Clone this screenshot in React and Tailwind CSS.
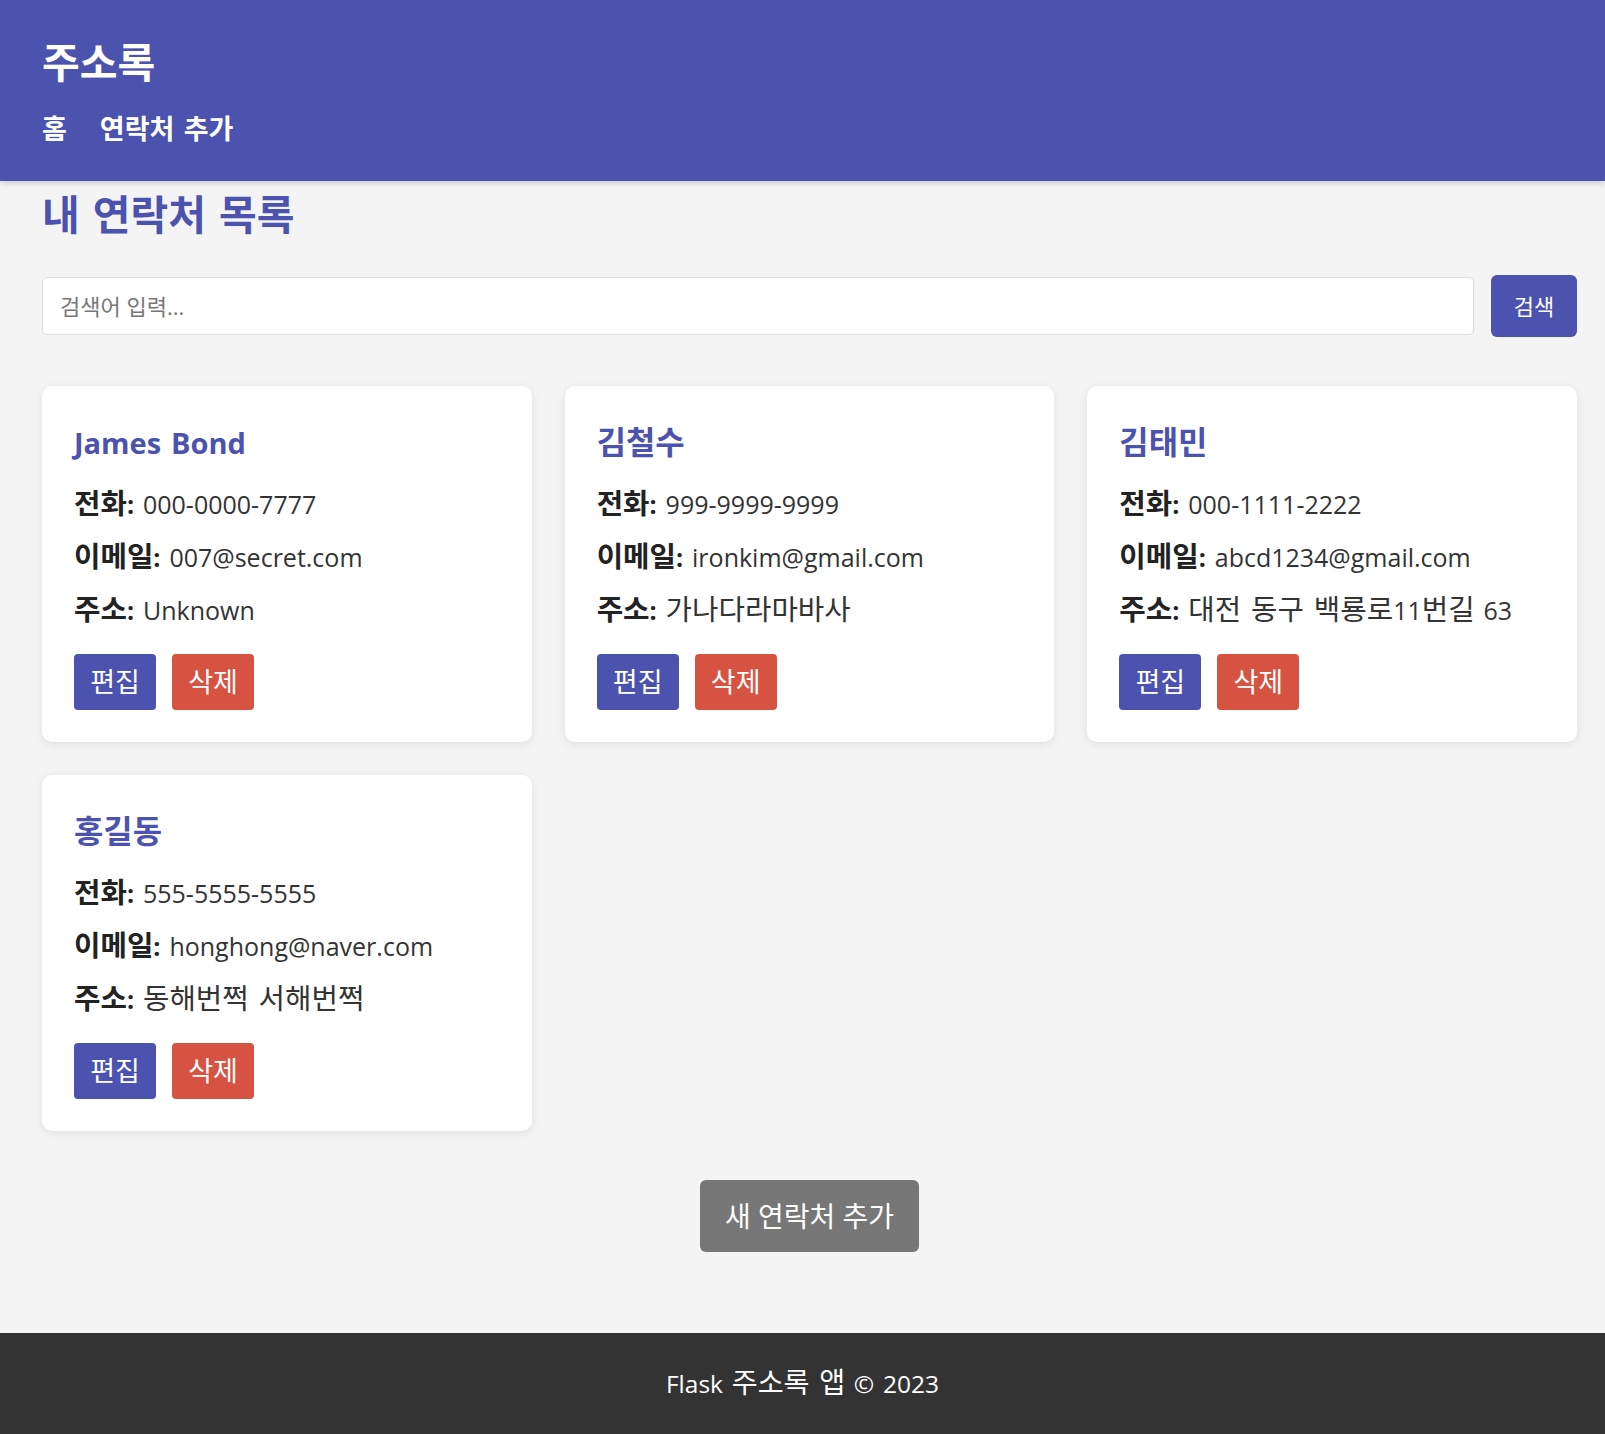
import React from 'react'

const contacts = [
  { name: 'James Bond', phone: '000-0000-7777', email: '007@secret.com', address: 'Unknown' },
  { name: '김철수', phone: '999-9999-9999', email: 'ironkim@gmail.com', address: '가나다라마바사' },
  { name: '김태민', phone: '000-1111-2222', email: 'abcd1234@gmail.com', address: '대전 동구 백룡로11번길 63' },
  { name: '홍길동', phone: '555-5555-5555', email: 'honghong@naver.com', address: '동해번쩍 서해번쩍' },
]

// Hangul runs in the fallback font come out narrower than the original, so bump them up a bit
const Ko = ({ text, big }) =>
  text.split(/([가-힣]+(?: [가-힣]+)*)/).map((part, i) =>
    /[가-힣]/.test(part) ? (
      <span key={i} className={big ? 'text-[1.1em] leading-none' : 'text-[1.15em] leading-none'}>
        {part}
      </span>
    ) : (
      part
    )
  )

const ContactCard = ({ contact }) => (
  <div className="bg-white rounded-[10px] p-[32px] shadow-[0_2px_8px_rgba(0,0,0,0.09)] flex flex-col">
    <h3 className="h-[50px] text-[29px] leading-[50px] font-bold text-[#4b53ae] mb-[10px]">
      <Ko text={contact.name} big />
    </h3>
    <p className="h-[53px] text-[25px] leading-[53px] text-[#333]">
      <strong className="font-bold text-[#222]"><Ko text="전화:" /></strong> {contact.phone}
    </p>
    <p className="h-[53px] text-[25px] leading-[53px] text-[#333]">
      <strong className="font-bold text-[#222]"><Ko text="이메일:" /></strong> {contact.email}
    </p>
    <p className="h-[53px] text-[25px] leading-[53px] text-[#333]">
      <strong className="font-bold text-[#222]"><Ko text="주소:" /></strong> <Ko text={contact.address} />
    </p>
    <div className="mt-[17px] flex gap-[16px]">
      <button className="w-[82px] h-[56px] rounded-[4px] bg-[#4b53ae] text-white text-[27px]">편집</button>
      <button className="w-[82px] h-[56px] rounded-[4px] bg-[#d65342] text-white text-[27px]">삭제</button>
    </div>
  </div>
)

const App = () => {
  return (
    <div
      className="min-h-screen flex flex-col bg-[#f4f4f4] [word-spacing:0.15em]"
      style={{ fontFamily: "'Open Sans', 'Noto Sans CJK KR', sans-serif" }}
    >
      {/* Header */}
      <header className="relative z-10 h-[181px] bg-[#4b53ae] pl-[42px] text-white shadow-[0_2px_6px_rgba(0,0,0,0.18)]">
        <h1 className="pt-[40px] text-[41px] leading-[44px] font-bold">주소록</h1>
        <nav className="mt-[30px] flex gap-[33px] text-[27px] leading-[30px] font-bold">
          <a href="#">홈</a>
          <a href="#">연락처 추가</a>
        </nav>
      </header>

      <main className="flex-1 pl-[42px] pr-[28px]">
        <h2 className="mt-[11px] text-[41px] leading-[44px] font-bold text-[#4b53ae]">내 연락처 목록</h2>

        {/* Search */}
        <form className="mt-[39px] flex items-center gap-[17px]" onSubmit={(e) => e.preventDefault()}>
          <input
            type="text"
            placeholder="검색어 입력..."
            className="flex-1 h-[58px] rounded-[5px] border border-[#ddd] bg-white px-[17px] text-[22px] text-[#333] placeholder:text-[#777] outline-none"
          />
          <button className="w-[86px] h-[62px] rounded-[6px] bg-[#4b53ae] text-white text-[22px]">검색</button>
        </form>

        {/* Contact list */}
        <div className="mt-[49px] grid grid-cols-3 gap-[33px]">
          {contacts.map((c) => (
            <ContactCard key={c.name} contact={c} />
          ))}
        </div>

        <div className="mt-[49px] mb-[81px] flex justify-center">
          <button className="w-[219px] h-[72px] rounded-[6px] bg-[#777] text-white text-[28px]">새 연락처 추가</button>
        </div>
      </main>

      <footer className="h-[101px] bg-[#333] text-white text-[24.5px] leading-[32px] flex items-center justify-center">
        <span>
          Flask <Ko text="주소록 앱" /> © 2023
        </span>
      </footer>
    </div>
  )
}

export default App
